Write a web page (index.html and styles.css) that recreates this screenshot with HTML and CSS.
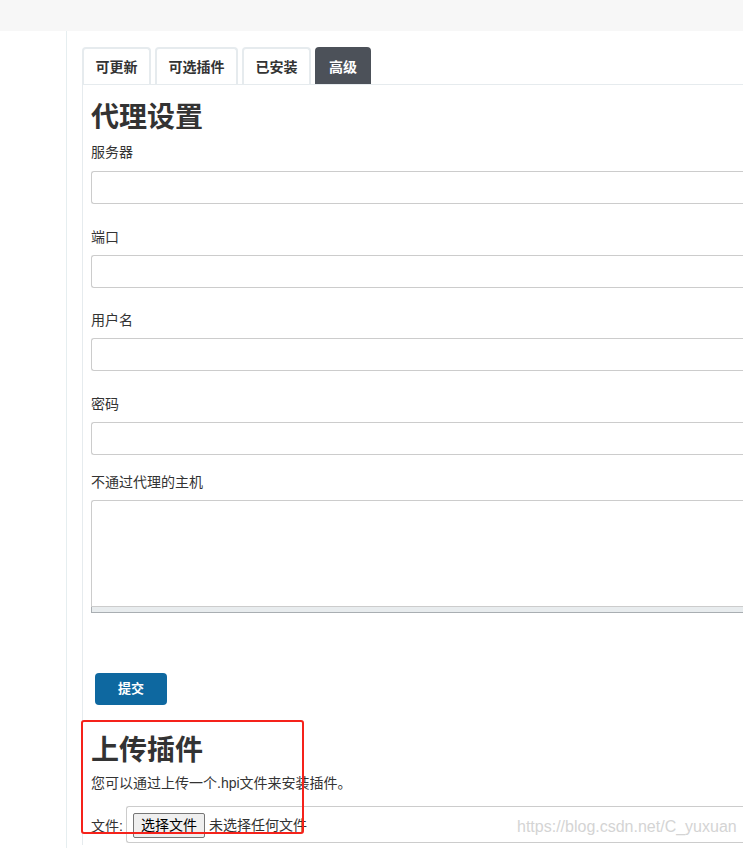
FILE: index.html
```html
<!DOCTYPE html>
<html lang="zh">
<head>
<meta charset="utf-8">
<title>插件管理</title>
<link rel="stylesheet" href="styles.css">
</head>
<body>
<div class="topbar"></div>
<div class="main">
  <div class="sidebar"></div>
  <div class="content">
    <div class="tabs">
      <div class="tab">可更新</div>
      <div class="tab">可选插件</div>
      <div class="tab">已安装</div>
      <div class="tab active">高级</div>
    </div>
    <div class="panel">
      <h2 class="title">代理设置</h2>
      <div class="field first">
        <div class="label">服务器</div>
        <div class="input"></div>
      </div>
      <div class="field wide">
        <div class="label">端口</div>
        <div class="input"></div>
      </div>
      <div class="field">
        <div class="label">用户名</div>
        <div class="input"></div>
      </div>
      <div class="field wide">
        <div class="label">密码</div>
        <div class="input"></div>
      </div>
      <div class="field short">
        <div class="label">不通过代理的主机</div>
        <div class="textarea"></div>
        <div class="resize-bar"></div>
      </div>
      <div class="submit">提交</div>
      <div class="upload">
        <h2 class="title">上传插件</h2>
        <p class="desc">您可以通过上传一个.hpi文件来安装插件。</p>
        <div class="file-row">
          <span class="file-label">文件:</span>
          <div class="file-box">
            <span class="file-btn">选择文件</span>
            <span class="file-none">未选择任何文件</span>
          </div>
        </div>
        <div class="highlight"></div>
      </div>
    </div>
  </div>
</div>
<div class="watermark">https://blog.csdn.net/C_yuxuan</div>
</body>
</html>
```

FILE: styles.css
```css
html, body {
  margin: 0;
  padding: 0;
  overflow: hidden;
  height: 848px;
  background: #fff;
  font-family: "Liberation Sans", "Noto Sans CJK SC", sans-serif;
  color: #333;
}
.topbar {
  height: 31px;
  background: #f7f7f7;
}
.main {
  display: flex;
  width: 1100px;
  height: 817px;
}
.sidebar {
  width: 66px;
  border-right: 1px solid #e6eef0;
}
.content {
  flex: 1;
  padding: 16px 0 0 15px;
}
.tabs {
  display: flex;
  gap: 4px;
}
.tab {
  height: 35px;
  line-height: 36px;
  padding: 0 11.5px;
  border: 2px solid #e6ebee;
  border-bottom: none;
  border-radius: 4px 4px 0 0;
  font-size: 14px;
  font-weight: bold;
  color: #333;
}
.tab.active {
  padding: 0 12px;
  background: #4c5159;
  border-color: #4c5159;
  color: #fff;
}
.panel {
  border: 1px solid #e6ebee;
  border-right: none;
  border-bottom: none;
  padding: 0 0 0 8px;
  height: 760px;
}
.title {
  margin: 15px 0 0;
  font-size: 28px;
  line-height: 36px;
  font-weight: bold;
  color: #333;
}
.field {
  margin-top: 22px;
}
.field.wide {
  margin-top: 23px;
}
.field.first {
  margin-top: 6px;
}
.field.short {
  margin-top: 17px;
}
.label {
  font-size: 14px;
  line-height: 20px;
  margin-bottom: 8px;
}
.field.first .label {
  margin-bottom: 9px;
}
.input {
  height: 31px;
  border: 1px solid #ccc;
  border-right: none;
  border-radius: 3px 0 0 3px;
}
.textarea {
  height: 105px;
  border: 1px solid #ccc;
  border-right: none;
  border-radius: 3px 0 0 0;
}
.resize-bar {
  height: 5px;
  background: #e8ecee;
  border-left: 1px solid #a9aeb2;
  border-bottom: 1px solid #a9aeb2;
}
.submit {
  margin: 60px 0 0 4px;
  width: 72px;
  height: 32px;
  line-height: 32px;
  background: #0e68a0;
  border-radius: 4px;
  color: #fff;
  font-size: 13px;
  font-weight: bold;
  text-align: center;
}
.upload {
  position: relative;
  margin-top: 28px;
}
.upload .title {
  margin-top: 0;
}
.desc {
  margin: 4px 0 0;
  font-size: 14px;
  line-height: 20px;
}
.file-row {
  display: flex;
  align-items: flex-start;
  margin-top: 13px;
}
.file-label {
  font-size: 14px;
  line-height: 20px;
  margin-top: 10px;
  width: 35px;
}
.file-box {
  flex: 1;
  height: 37px;
  border: 1px solid #ccc;
  border-right: none;
  border-radius: 3px 0 0 3px;
  padding: 6px 0 0 6px;
  box-sizing: border-box;
  display: flex;
  align-items: flex-start;
  font-size: 14px;
}
.file-btn {
  display: inline-block;
  height: 23px;
  line-height: 23px;
  padding: 0 7px;
  border: 1px solid #767676;
  border-radius: 2px;
  background: #efefef;
  color: #000;
  font-size: 14px;
}
.file-none {
  margin-left: 4px;
  line-height: 25px;
  color: #333;
}
.highlight {
  position: absolute;
  left: -10px;
  top: -13px;
  width: 219px;
  height: 110px;
  border: 2px solid #f5221b;
  border-radius: 3px;
}
.watermark {
  position: absolute;
  left: 517px;
  top: 818px;
  font-size: 16px;
  color: #d4d4d4;
  font-family: "Liberation Sans", sans-serif;
}
```
